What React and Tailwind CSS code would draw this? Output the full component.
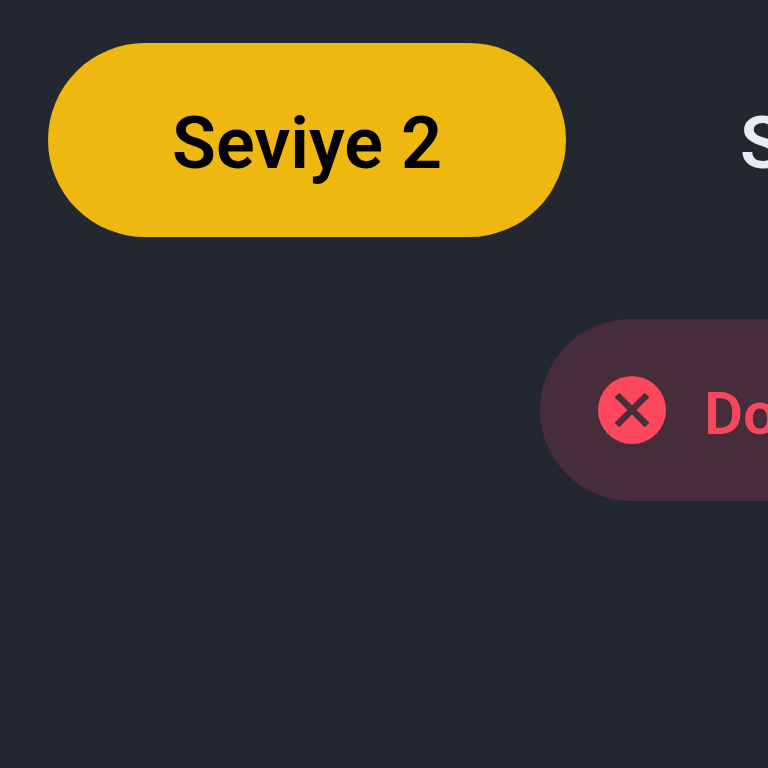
import { useState } from "react";

const levels = ["Seviye 2", "Seviye 3"];

function CloseCircle() {
  return (
    <svg viewBox="0 0 68 68" className="w-[68px] h-[68px] shrink-0" aria-hidden="true">
      <circle cx="34" cy="34" r="34" fill="#fd475d" />
      <path d="M19 19L49 49M49 19L19 49" stroke="#472d3a" strokeWidth="6.5" />
    </svg>
  );
}

export default function App() {
  const [active, setActive] = useState(0);

  return (
    <main className="min-h-screen overflow-hidden bg-[#222730] pl-12 pt-[43px] font-['Roboto',sans-serif] font-semibold">
      <div className="flex gap-[50px]">
        {levels.map((level, idx) => (
          <button
            key={level}
            onClick={() => setActive(idx)}
            className={
              idx === active
                ? "h-[194px] shrink-0 rounded-full bg-[#efb810] px-[124px] pt-2 text-[72px] whitespace-nowrap text-black"
                : "h-[194px] shrink-0 rounded-full px-[124px] pt-2 text-[72px] whitespace-nowrap text-[#eaecef]"
            }
          >
            {level}
          </button>
        ))}
      </div>

      <div className="mt-[82px] ml-[492px] flex h-[182px] w-max items-center gap-[38px] rounded-full bg-[#472d3a] px-[58px] text-[60px] text-[#f5475d]">
        <CloseCircle />
        <span className="pt-2">Doğrulanmadı</span>
      </div>
    </main>
  );
}
